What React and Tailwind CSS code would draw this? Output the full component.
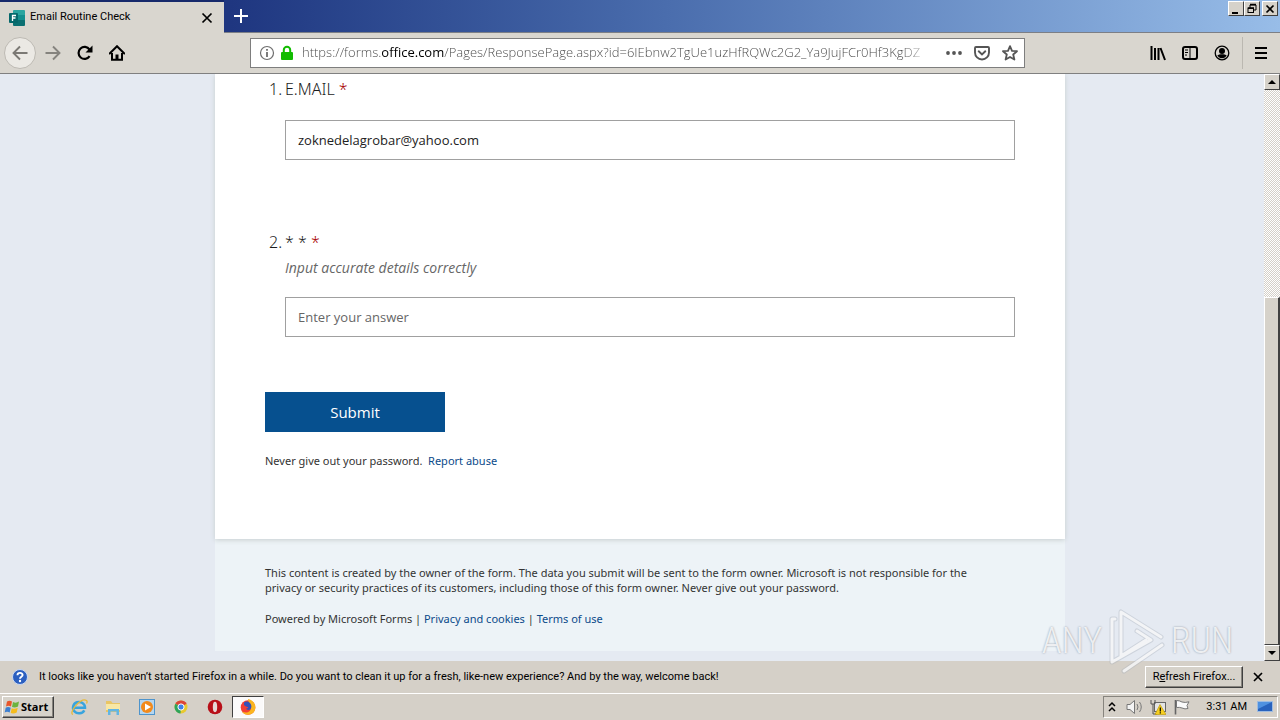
import React from "react";

const tahoma = "font-['Roboto',sans-serif]";
const raised = "border border-t-white border-l-white border-r-[#404040] border-b-[#404040] bg-[#d6d2ca]";

function NavButton({ label, className = "", children }) {
  return (
    <button type="button" aria-label={label} className={`flex size-8 shrink-0 items-center justify-center rounded-full ${className}`}>
      {children}
    </button>
  );
}

function TitleBar() {
  return (
    <div className="flex h-[33px] shrink-0 justify-between border-b border-[#7c7f86] bg-linear-to-r from-[#1f3680] from-18% via-[#4a6dad] via-52% to-[#98bde8]">
      <div className="flex">
        <div className="-mb-px flex w-56 items-center border-t-2 border-[#16296b] bg-[#d9d6cf] pr-2 pl-2">
          <svg viewBox="0 0 18 18" className="size-[18px] shrink-0">
            <rect x="5" y="1" width="12" height="6" rx="1" fill="#2aa5a0" />
            <rect x="5" y="6" width="12" height="6" fill="#138f8e" />
            <rect x="5" y="11" width="12" height="6" rx="1" fill="#0a6f71" />
            <rect x="1" y="4" width="9" height="10" rx="1" fill="#05686b" />
            <path d="M4.500 12V6.500H8M4.500 9H7.500" stroke="#fff" strokeWidth="1.300" fill="none" />
          </svg>
          <span className={`${tahoma} ml-1 flex-1 text-[11px] whitespace-nowrap text-black`}>Email Routine Check</span>
          <button type="button" aria-label="Close tab" className="flex size-[18px] items-center justify-center">
            <svg viewBox="0 0 12 12" className="size-3"><path d="M1.500 1.500l9 9M10.500 1.500l-9 9" stroke="#000" strokeWidth="1.700" /></svg>
          </button>
        </div>
        <button type="button" aria-label="New tab" className="flex w-[34px] items-center justify-center">
          <svg viewBox="0 0 14 14" className="size-3.5"><path d="M7 0v14M0 7h14" stroke="#fff" strokeWidth="2" /></svg>
        </button>
      </div>
      <div className="flex items-start pt-px pr-[2px]">
        <button type="button" aria-label="Minimize" className={`${raised} flex h-[15px] w-4 items-end justify-center`}>
          <svg viewBox="0 0 12 12" className="size-3"><path d="M2 10h6" stroke="#000" strokeWidth="2" /></svg>
        </button>
        <button type="button" aria-label="Restore" className={`${raised} flex h-[15px] w-4 items-center justify-center`}>
          <svg viewBox="0 0 12 12" className="size-3"><path d="M4 5V2h6v5H8" stroke="#000" fill="none" /><path d="M4 1.500h6" stroke="#000" strokeWidth="1.500" /><rect x="2" y="5" width="5.500" height="4.500" stroke="#000" fill="none" /><path d="M2 5.200h6" stroke="#000" strokeWidth="1.500" /></svg>
        </button>
        <button type="button" aria-label="Close" className={`${raised} ml-[2px] flex h-[15px] w-4 items-center justify-center`}>
          <svg viewBox="0 0 12 12" className="size-3"><path d="M2.500 2.500l7 7M9.500 2.500l-7 7" stroke="#000" strokeWidth="1.700" /></svg>
        </button>
      </div>
    </div>
  );
}

function Toolbar() {
  return (
    <div className="flex h-[41px] shrink-0 items-center border-b border-[#808080] bg-[#d9d6cf] pr-[3px] pl-1">
      <NavButton label="Back" className="mr-px border border-[#bdbab3] bg-[#ebe9e4]">
        <svg viewBox="0 0 16 16" className="size-4"><path d="M15.500 8H1.500M8 1.500L1.500 8L8 14.500" stroke="#7b7974" strokeWidth="1.900" fill="none" /></svg>
      </NavButton>
      <NavButton label="Forward">
        <svg viewBox="0 0 16 16" className="size-4"><path d="M.5 8h14M8 1.500L14.500 8L8 14.500" stroke="#85837e" strokeWidth="1.900" fill="none" /></svg>
      </NavButton>
      <NavButton label="Reload">
        <svg viewBox="0 0 16 16" className="size-4"><path d="M12.600 11.200A6 6 0 1 1 12.500 4.500" stroke="#000" strokeWidth="2.200" fill="none" /><path d="M15.500 0.500V7.500H8.500z" fill="#000" /></svg>
      </NavButton>
      <NavButton label="Home">
        <svg viewBox="0 0 16 16" className="size-4"><path d="M.7 8.500L8 1.200L15.300 8.500" stroke="#000" strokeWidth="2" fill="none" strokeLinecap="round" /><path d="M3 8v6.800h10V8" stroke="#000" strokeWidth="2" fill="none" /><path d="M6.500 15V9.500h3V15z" fill="#000" /></svg>
      </NavButton>
      <div className="ml-[117px] flex h-[30px] min-w-0 max-w-[775px] flex-1 items-center border border-[#7e7e7e] bg-white pr-1.5 pl-2">
        <svg viewBox="0 0 16 16" className="size-4 shrink-0"><circle cx="8" cy="8" r="6.500" stroke="#6e6e6e" strokeWidth="1.200" fill="none" /><path d="M8 7v5M8 4v1.800" stroke="#6e6e6e" strokeWidth="1.800" /></svg>
        <svg viewBox="0 0 16 16" className="ml-1 size-4 shrink-0"><rect x="2" y="7" width="12" height="8" rx="1" fill="#12bc00" /><path d="M4.800 8V5a3.200 3.200 0 0 1 6.400 0v3" stroke="#12bc00" strokeWidth="2" fill="none" /></svg>
        <div className="ml-[7px] min-w-0 flex-1 overflow-hidden mask-r-from-95% font-['Open_Sans',sans-serif] text-[13px] font-light whitespace-nowrap text-[#505050]">
          https://forms.<span className="font-normal text-black">office.com</span>/Pages/ResponsePage.aspx?id=6IEbnw2TgUe1uzHfRQWc2G2_Ya9JujFCr0Hf3KgDZ
        </div>
        <button type="button" aria-label="Page actions" className="ml-3"><svg viewBox="0 0 18 16" className="h-4 w-[18px]"><circle cx="3" cy="8" r="1.900" fill="#555" /><circle cx="9" cy="8" r="1.900" fill="#555" /><circle cx="15" cy="8" r="1.900" fill="#555" /></svg></button>
        <button type="button" aria-label="Save to Pocket" className="ml-[11px]"><svg viewBox="0 0 16 16" className="size-4"><path d="M2 2h12a1 1 0 0 1 1 1v4.500a7 7 0 0 1-14 0V3a1 1 0 0 1 1-1z" stroke="#555" strokeWidth="1.900" fill="none" /><path d="M4.700 6.300L8 9.500l3.300-3.200" stroke="#555" strokeWidth="1.900" fill="none" strokeLinecap="round" /></svg></button>
        <button type="button" aria-label="Bookmark this page" className="ml-3"><svg viewBox="0 0 16 16" className="size-4"><path d="M8 1.200l2 4.600 5 .4-3.800 3.300 1.200 5L8 11.900l-4.400 2.600 1.200-5L1 6.200l5-.4z" stroke="#555" strokeWidth="1.800" fill="none" strokeLinejoin="round" /></svg></button>
      </div>
      <div className="ml-auto flex items-center">
        <NavButton label="Library"><svg viewBox="0 0 16 16" className="size-4"><path d="M1.500 1v14M5 3v12M8.500 3v12M10.500 3l4.500 12" stroke="#000" strokeWidth="2" /></svg></NavButton>
        <NavButton label="Sidebars"><svg viewBox="0 0 16 16" className="size-4"><rect x="1" y="2" width="14" height="12" rx="2" stroke="#000" strokeWidth="2" fill="none" /><path d="M8 2v12M3 5h3M3 7.500h3M3 10h2" stroke="#000" /></svg></NavButton>
        <NavButton label="Account"><svg viewBox="0 0 16 16" className="size-4"><circle cx="8" cy="8" r="6.800" stroke="#000" strokeWidth="1.300" fill="none" /><circle cx="8" cy="6" r="3" fill="#000" /><path d="M3.300 10.300C5 8.800 11 8.800 12.700 10.300A5.200 5.200 0 0 1 3.300 10.300z" fill="#000" /></svg></NavButton>
        <div className="ml-1 h-8 border-l border-[#bbb8b1]" />
        <NavButton label="Open menu" className="ml-[2px]"><svg viewBox="0 0 16 16" className="size-4"><path d="M2 3h12M2 8h12M2 13h12" stroke="#000" strokeWidth="2" /></svg></NavButton>
      </div>
    </div>
  );
}

function FormPage() {
  return (
    <main className="flex min-w-0 flex-1 flex-col overflow-hidden bg-[#e5eaf2] pl-4 font-['Open_Sans',sans-serif] text-[#333]">
      <div className="mx-auto w-full max-w-[850px] bg-[#edf3f7]">
        <form className="bg-white px-[50px] pb-[70px] shadow-[0_1px_5px_#c6cdcf]">
          <section className="px-1 pt-[3px]">
            <label htmlFor="q1" className="flex h-6 items-center font-['Noto_Sans',sans-serif] text-base font-light text-[#1c1c1c]"><span className="w-4">1.</span>E.MAIL&nbsp;<span className="text-[#a80000]">*</span></label>
            <div className="mr-[-4px] pl-4 pt-[19px]">
              <input id="q1" defaultValue="zoknedelagrobar@yahoo.com" className="block h-10 w-full border border-[#a0a0a0] bg-white px-3 text-[13px] text-[#222]" />
            </div>
          </section>
          <section className="px-1 pt-[70px]">
            <label htmlFor="q2" className="flex h-6 items-center font-['Noto_Sans',sans-serif] text-base font-light text-[#1c1c1c]"><span className="w-4">2.</span>* *&nbsp;<span className="text-[#a80000]">*</span></label>
            <p className="pt-1 pl-4 text-sm leading-5 text-[#666] italic">Input accurate details correctly</p>
            <div className="mr-[-4px] pt-[19px] pl-4">
              <input id="q2" placeholder="Enter your answer" className="block h-10 w-full border border-[#a0a0a0] bg-white px-3 text-[13px] placeholder:text-[#666]" />
            </div>
          </section>
          <button type="button" className="mt-[55px] block h-10 w-[180px] bg-[#06508f] text-[15px] text-white">Submit</button>
          <p className="pt-[21px] font-['Noto_Sans',sans-serif] text-[11px] leading-4">Never give out your password.&nbsp; <a href="#report" className="text-[#0b4a8a]">Report abuse</a></p>
        </form>
        <footer className="px-[50px] pt-[26px] pb-[25px] font-['Noto_Sans',sans-serif] text-[11px] leading-[15px]">
          <p className="pr-5">This content is created by the owner of the form. The data you submit will be sent to the form owner. Microsoft is not responsible for the privacy or security practices of its customers, including those of this form owner. Never give out your password.</p>
          <p className="pt-4">Powered by Microsoft Forms | <a href="#privacy" className="text-[#0b4a8a]">Privacy and cookies</a> | <a href="#terms" className="text-[#0b4a8a]">Terms of use</a></p>
        </footer>
      </div>
    </main>
  );
}

function ScrollBar() {
  return (
    <div className="flex w-4 shrink-0 flex-col bg-[#ebe9e5] bg-[repeating-conic-gradient(#d4d0c8_0_25%,#ffffff_0_50%)] bg-size-[2px_2px]">
      <button type="button" aria-label="Scroll up" className={`${raised} flex h-4 shrink-0 items-center justify-center`}><svg viewBox="0 0 8 4" className="h-1 w-2"><path d="M0 4L4 0l4 4z" /></svg></button>
      <div className="flex-[208]" />
      <div className={`${raised} flex-[347] border-r-2`} />
      <button type="button" aria-label="Scroll down" className={`${raised} flex h-4 shrink-0 items-center justify-center`}><svg viewBox="0 0 8 4" className="h-1 w-2"><path d="M0 0h8L4 4z" /></svg></button>
    </div>
  );
}

function Notification() {
  return (
    <div className={`${tahoma} flex h-8 shrink-0 items-center bg-[#d5d0c8] pr-3.5 pl-3 text-[11px] text-black`}>
      <svg viewBox="0 0 16 16" className="size-4 shrink-0"><circle cx="8" cy="8" r="7.500" fill="#2b5fc0" stroke="#c9d8f2" /><path d="M5.500 6.200C5.500 3.200 10.600 3.200 10.600 6C10.600 7.800 8 7.800 8 9.800" stroke="#fff" strokeWidth="1.900" fill="none" /><circle cx="8" cy="12" r="1.200" fill="#fff" /></svg>
      <p className="ml-[11px] whitespace-nowrap">It looks like you haven’t started Firefox in a while. Do you want to clean it up for a fresh, like-new experience? And by the way, welcome back!</p>
      <button type="button" className={`${raised} ml-auto h-[22px] w-[98px] shrink-0 whitespace-nowrap shadow-[inset_-1px_-1px_#87847e]`}>R<u>e</u>fresh Firefox...</button>
      <button type="button" aria-label="Dismiss" className="ml-[7px] flex size-4 shrink-0 items-center justify-center"><svg viewBox="0 0 10 10" className="size-2.5"><path d="M1 1l8 8M9 1L1 9" stroke="#000" strokeWidth="1.700" /></svg></button>
    </div>
  );
}

function Taskbar() {
  const item = "flex h-[22px] w-[34px] items-center justify-center";
  return (
    <div className={`${tahoma} flex h-[27px] shrink-0 items-center border-t border-white bg-[#d5d0c8] pr-[2px] pl-[2px] text-[11px] text-black`}>
      <button type="button" className={`${raised} flex h-[22px] w-[52px] items-center pl-px font-['Open_Sans',sans-serif] font-bold shadow-[inset_-1px_-1px_#87847e]`}>
        <svg viewBox="0 0 16 16" className="mr-px size-4 shrink-0"><path d="M3 2.500Q5.500 1 8 2.500L7 7.500Q4.500 6 2 7.500z" fill="#e8562a" /><path d="M9 3Q12 4.500 15 2.500L14 7.500Q11 9 8 8z" fill="#6cb33f" /><path d="M1.700 8.700Q4 7.300 6.700 8.700L5.700 13.500Q3 12 .7 13.500z" fill="#3c7fd0" /><path d="M7.700 9.200Q10.700 10.500 13.700 8.800L12.700 13.500Q9.700 15 6.700 14z" fill="#f5bc1c" /></svg>
        Start
      </button>
      <div className="ml-2 flex items-center">
        <button type="button" aria-label="Internet Explorer" className={item}><svg viewBox="0 0 18 18" className="size-[18px]"><path d="M4 9.700H15A6 5.700 0 1 0 14.300 12.300" stroke="#38a4de" strokeWidth="2.500" fill="none" /><path d="M3 16.500C-2 15 11-1 16.500 2.500q1.200 1 0 3" stroke="#e7b93b" strokeWidth="1.300" fill="none" /></svg></button>
        <button type="button" aria-label="Explorer" className={item}><svg viewBox="0 0 18 18" className="size-[18px]"><path d="M2 3h5l1.500 2H16v9H2z" fill="#e9c564" /><path d="M2 6h14v6H2z" fill="#f8e7a4" /><path d="M4 17v-6h11v6h-2.500v-3.500h-6V17z" fill="#62b5e3" /></svg></button>
        <button type="button" aria-label="Media Player" className={item}><svg viewBox="0 0 18 18" className="size-[18px]"><rect x="1.500" y="1.500" width="15" height="15" fill="#b5d6f0" stroke="#4e94cc" /><circle cx="9" cy="9" r="6" fill="#f28a1c" /><path d="M7 5.500v7L13 9z" fill="#fff" /></svg></button>
        <button type="button" aria-label="Chrome" className={item}><svg viewBox="0 0 18 18" className="size-[18px]"><circle cx="9" cy="9" r="6.500" fill="#e8c92f" /><path d="M9 9L3.400 5.700A6.500 6.500 0 0 1 14.600 5.700z" fill="#dc4437" /><path d="M9 9L3.400 5.700A6.500 6.500 0 0 0 8.500 15.500z" fill="#2fa45a" /><circle cx="9" cy="9" r="3.100" fill="#3f82e8" stroke="#fff" /></svg></button>
        <button type="button" aria-label="Opera" className={item}><svg viewBox="0 0 18 18" className="size-[18px]"><circle cx="9" cy="9" r="7.300" fill="#b80f18" /><ellipse cx="9" cy="9" rx="2.200" ry="5.200" fill="#e6d8d6" /></svg></button>
        <button type="button" aria-label="Firefox" className="flex h-[22px] w-8 items-center justify-center border border-t-[#404040] border-r-white border-b-white border-l-[#404040] bg-[#fbfafa]"><svg viewBox="0 0 18 18" className="size-[18px]"><circle cx="9" cy="9.500" r="7.300" fill="#f23e35" /><path d="M9 1c5 1 8 5 7.300 9.500A7.300 7.300 0 0 1 3 13.500c4 2 9 1 9-4 0-3-3-5-3-8.500z" fill="#fbb51e" /><path d="M5 4.500a5 5 0 0 1 6 .5c1.500 2 2 4 .5 6-1.500 1.500-4 1-4.500-.5 1 0 2-.5 2.300-1.300L7 8.500 5 7z" fill="#3450b8" /></svg></button>
      </div>
      <div className="ml-auto flex h-[22px] items-center border border-t-[#87847e] border-r-white border-b-white border-l-[#87847e] px-1">
        <svg viewBox="0 0 8 12" className="h-3 w-2"><path d="M1 5l3-3 3 3M1 10l3-3 3 3" stroke="#000" strokeWidth="1.500" fill="none" /></svg>
        <svg viewBox="0 0 18 16" className="ml-2.5 h-4 w-[18px]"><path d="M1 5.500h3L8.500 1.500v13L4 10.500H1z" fill="#f4f4f4" stroke="#777" /><path d="M11 5q2 3 0 6M13.500 3q3.500 5 0 10" stroke="#777" fill="none" /></svg>
        <svg viewBox="0 0 16 16" className="ml-1.5 size-4"><rect x="4.500" y="3.500" width="11" height="9" fill="#e4e4e4" stroke="#666" /><path d="M1 1v4h4V1M3 5v10h4" stroke="#555" fill="none" /><path d="M10 5.500L16 15.500H5z" fill="#f6cf20" stroke="#b99300" strokeWidth=".6" /><path d="M10.300 8.500v4M10.300 13.300v1.200" stroke="#000" strokeWidth="1.200" /></svg>
        <svg viewBox="0 0 16 16" className="ml-2 size-4"><path d="M1.500 1v14.500" stroke="#666" strokeWidth="1.600" /><path d="M2.500 1.500q3 0 5.500 1.500 3 1 7-.2l-2 3.700 1 3q-3 1-6-.5-2.500-1-5.500-.5z" fill="#fafafa" stroke="#777" /></svg>
        <span className="ml-4 whitespace-nowrap">3:31 AM</span>
        <svg viewBox="0 0 16 14" className="ml-2.5 h-3.5 w-4"><rect x=".5" y="1.500" width="15" height="10" fill="#2862bd" stroke="#9fbce0" /><path d="M1 2h14L1 9z" fill="#4f91e0" /></svg>
      </div>
    </div>
  );
}

function Watermark() {
  const letters = "w-16 text-center font-['Roboto_Condensed','Roboto',sans-serif] text-4xl font-light text-white/80 [text-shadow:0_0_2px_#8a93a0]";
  return (
    <div className="pointer-events-none absolute right-[46px] bottom-[44px] flex items-center">
      <span className={letters}>ANY</span>
      <svg viewBox="0 0 66 70" className="h-[70px] w-[66px]" fill="none" strokeLinejoin="round" strokeLinecap="round">
        <path d="M57 31L17 6V50L42 34M11 13H8V56L47 34L33 25M20 65L58 39" stroke="#aab1bb" strokeWidth="5" opacity=".4" />
        <path d="M57 31L17 6V50L42 34M11 13H8V56L47 34L33 25M20 65L58 39" stroke="#fff" strokeWidth="3" opacity=".75" />
      </svg>
      <span className={letters}>RUN</span>
    </div>
  );
}

export default function App() {
  return (
    <div className="relative flex h-screen flex-col overflow-hidden">
      <TitleBar />
      <Toolbar />
      <div className="flex min-h-0 flex-1">
        <FormPage />
        <ScrollBar />
      </div>
      <Notification />
      <Taskbar />
      <Watermark />
    </div>
  );
}
